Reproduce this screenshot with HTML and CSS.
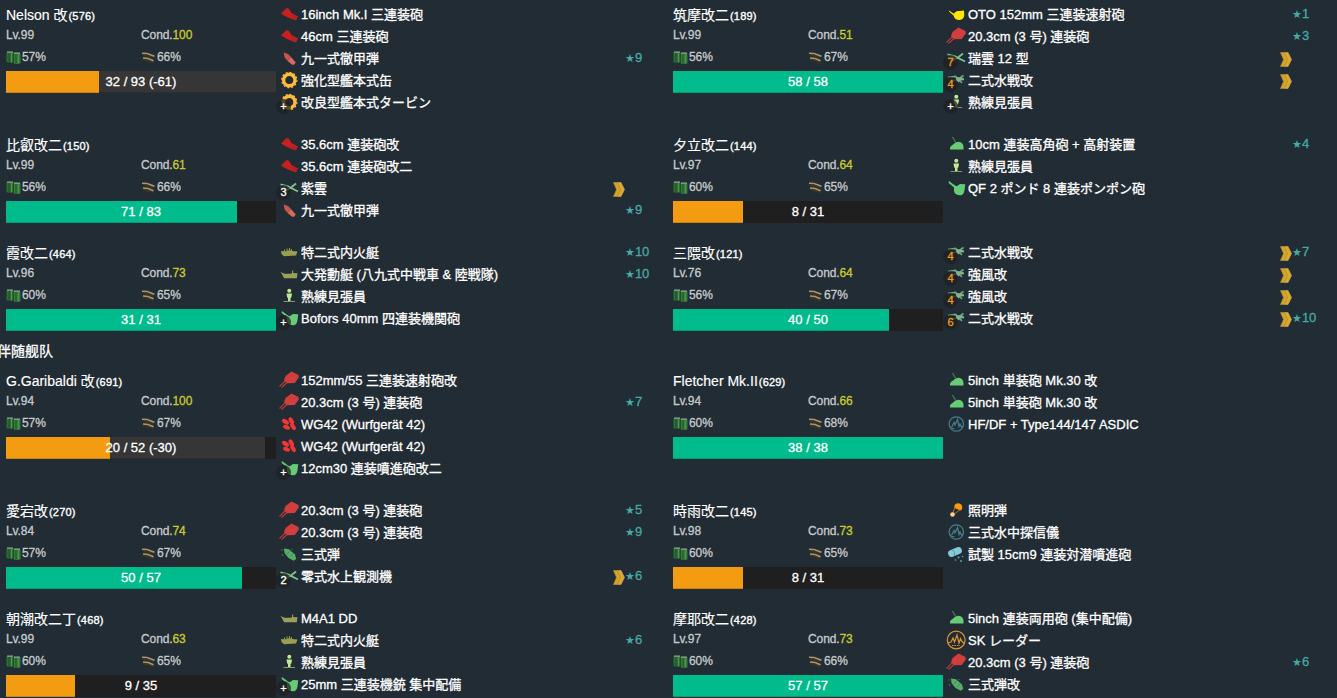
FILE: index.html
```html
<!DOCTYPE html>
<html lang="ja">
<head>
  <meta charset="UTF-8">
  <meta name="viewport" content="width=device-width, initial-scale=1.0">
  <title>艦隊</title>
  <link rel="stylesheet" href="styles.css">
</head>
<body>

  <!-- Icons -->
  <svg class="defs">
    <symbol id="main-l" viewBox="0 0 20 20"><path fill="#c9201f" d="M2 9.500 7.500 4l2.500.8L12.500 9l6.500 3.500-2 4-5.500-2L7 12.500z"/><path stroke="#8a2326" stroke-width=".6" d="m13 11 5 3M12.500 12.500l4.500 3"/></symbol>
    <symbol id="main-m" viewBox="0 0 20 20"><path fill="#d13e3e" d="m12.500 1.500 7 3.500.3 2.500-4 5.500-8.500.3L5 10l1.500-4z"/><path stroke="#b83a3b" stroke-width="1.100" d="M6 11 .5 16.500M8 12.500l-5.500 5"/></symbol>
    <symbol id="second" viewBox="0 0 20 20"><path fill="#ffe600" d="m3 6.500 5 3.200C10 6.500 12 7 14 7l4-.5.3 4.500q-.5 4.700-4.500 5-5 .2-6.300-4.500L3 7.500z"/></symbol>
    <symbol id="ap" viewBox="0 0 20 20"><path fill="#c9544f" d="m4.500 4.500 4.500 1.500 3 3-4 3.500-2.300-3z"/><path fill="#d46a63" d="m12 9 4.800 5.500-2 2.500-2.500-.7-4-3.900z"/></symbol>
    <symbol id="gear" viewBox="0 0 20 20"><circle cx="10.300" cy="10" r="5.700" fill="none" stroke="#fdbb38" stroke-width="3.400"/><circle cx="10.300" cy="10" r="7.600" fill="none" stroke="#fdbb38" stroke-width="1.200" stroke-dasharray="2 1.980"/></symbol>
    <symbol id="plane" viewBox="0 0 20 20"><path fill="none" stroke="#7fc08c" stroke-width="1.900" d="m1.500 6.300 7.500 2.200 10 5M4.500 14l7.500-4.500L17 5.500"/><path fill="none" stroke="#5d9169" d="m1 9.500 7-1M3 12l6-1.500"/></symbol>
    <symbol id="fighter" viewBox="0 0 20 20"><path fill="none" stroke="#6ea97b" stroke-width="1.700" d="m2 7.500 7.500-1 6.500 6.500M5 11.500l7-2 5.500-4"/><path fill="#7fb58a" d="m10 7 5 .5 3 1v1.800l-3.500.2-2 2L10 10z"/></symbol>
    <symbol id="lookout" viewBox="0 0 20 20"><circle cx="10.300" cy="4.800" r="2" fill="#c0e898"/><path fill="#c0e898" d="M7.500 7.500h5.600l-.8 4-.8.500v3H9v-3l-.8-.5z"/><path stroke="#7d9f6b" d="M4.500 15.500h11.500"/></symbol>
    <symbol id="tank" viewBox="0 0 20 20"><path fill="#9a9e52" d="m2 9 3 .3V7.500h1v1.800h1.500V6.500h1v2.300l1.500-.5V6h1v2.500h1V7h1v2l5.500.5-1.500 4-12 .8L2.500 12z"/></symbol>
    <symbol id="boat" viewBox="0 0 20 20"><path fill="#9c9f57" d="m1.500 8 4 1.700h6l1.500-.5V6.500l1.200.3V9l4.300.2-.7 5H5L3.500 11z"/></symbol>
    <symbol id="aagun" viewBox="0 0 20 20"><path fill="#66cc76" d="m3 3 6 4.500 1.800.7L14 6l5.200.3-.5 4.700q-.5 5-3 6-4 .8-6.700-1.500-1.500-2-1-6L2.500 4.700z"/></symbol>
    <symbol id="hagun" viewBox="0 0 20 20"><path fill="none" stroke="#457c52" stroke-width="1.300" d="m6.500 3 3 5"/><path fill="#66cc76" d="M4 15.500q-.3-3.500 2.500-4.500 3-3.300 6-3.200 5 .7 5 5.200v2.500z"/></symbol>
    <symbol id="rocket" viewBox="0 0 20 20"><g fill="#f33535"><ellipse cx="6.500" cy="7.800" rx="4" ry="2.200" transform="rotate(35 6.500 7.800)"/><ellipse cx="12.300" cy="6.800" rx="3.800" ry="2.200" transform="rotate(60 12.300 6.800)"/><ellipse cx="7.500" cy="13.300" rx="3.600" ry="2.100" transform="rotate(20 7.500 13.300)"/><ellipse cx="14" cy="12.500" rx="4" ry="2.200" transform="rotate(60 14 12.500)"/></g></symbol>
    <symbol id="aashell" viewBox="0 0 20 20"><path fill="#55ad68" d="m5 4.500 5 .8 6 5.200 1.200 4.500-2.500 1.800L9.500 14 5.500 9z"/><path stroke="#36774a" stroke-width=".6" d="m8 10 3-3m0 6 3-3"/><g fill="#448f57"><circle cx="3" cy="6" r=".7"/><circle cx="3.500" cy="11" r=".8"/><circle cx="13" cy="5.500" r=".6"/></g></symbol>
    <symbol id="sonar" viewBox="0 0 20 20"><g fill="none" stroke="#467e8e" stroke-width="1.200"><circle cx="10.300" cy="10" r="7.200"/><path d="m4 13.500 2-1 2-4 1 2.500 2.500-5.500 1.500 7 1-2.500 1.500 3 1.500-1M5.500 14.500h3"/></g></symbol>
    <symbol id="radar" viewBox="0 0 20 20"><g fill="none" stroke="#dc922f" stroke-width="1.200"><circle cx="10.200" cy="10" r="8.900"/><path d="m2 13 3-1 2-4 1.500 4 2.500-7 2 8 1.500-4.500 1.500 3 2.500 2"/><path stroke-dasharray="1.500 1" d="M6 15.500h8"/></g></symbol>
    <symbol id="flare" viewBox="0 0 20 20"><path fill="#ff9a09" d="M8.500 5q2-2.500 5-1.500 3 1 2.700 4.500-.5 2.500-1.700 2.500L8.500 8z"/><path stroke="#c87a16" stroke-width=".9" d="m9 7-2.500 7M14.500 9.500l-7 5"/><circle cx="6.500" cy="14.500" r="2.300" fill="#ffce91"/></symbol>
    <symbol id="asw" viewBox="0 0 20 20"><path stroke="#83cad5" stroke-width="6.800" stroke-linecap="round" d="m5.500 9.500 7-3"/><path fill="none" stroke="#4b91a0" stroke-width=".8" d="M6.500 6q3 2 2 6"/><g fill="#64aab8"><circle cx="9.500" cy="16" r=".8"/><circle cx="12.500" cy="13.500" r="1"/><circle cx="15" cy="17" r=".9"/><circle cx="16.500" cy="12.500" r=".8"/></g></symbol>
    <symbol id="fuel" viewBox="0 0 15 13"><rect x=".5" y="1" width="7" height="10.500" rx="1" fill="#2c6e30"/><rect x="7.500" y="2" width="7" height="10.800" rx="1" fill="#347c38"/><path fill="#8fa694" d="M1 .5h6v1.300H1zM8 1.500h6v1.300H8z"/><path stroke="#5d9a61" stroke-width=".8" d="M5.500 2v9.500M12.300 3v9.500"/><path stroke="#1b4724" stroke-width=".8" d="M3 2v9M7.500 3v9M10 3v9"/></symbol>
    <symbol id="ammo" viewBox="0 0 15 13"><path stroke="#3a3425" stroke-width="3.500" d="M2.500 3 13 6M2 7.500l11 3"/><path stroke="#a99670" stroke-width="1.600" d="m1 2.200 5 .3 7.500 2.700M2 7l5 .5 5.500 2.300"/></symbol>
    <symbol id="alv" viewBox="0 0 12 15"><path fill="#d9a421" stroke="#a88d45" stroke-width=".7" d="M.5.500h3.800L7.500 7.500l-3.200 7H.5l3-7z"/><path fill="#e0aa22" stroke="#bca35c" stroke-width=".7" d="M4.500.5H8l3.500 7-3.500 7H4.500l3.200-7z"/></symbol>
  </svg>

  <div class="fleet">
    <div class="ship">
      <div class="info">
        <div class="ship-name">Nelson 改<small>(576)</small></div>
        <div class="stats"><span>Lv.99</span><span>Cond.<em>100</em></span></div>
        <div class="supply"><span><svg><use href="#fuel"/></svg>57%</span><span><svg><use href="#ammo"/></svg>66%</span></div>
        <div class="hp"><div class="bar warn" style="width: 34.4%"></div><div class="bar lost" style="width: 65.6%"></div><span>32 / 93 (-61)</span></div>
      </div>
      <div class="slots">
        <div class="slot"><svg><use href="#main-l"/></svg><p>16inch Mk.I 三連装砲</p></div>
        <div class="slot"><svg><use href="#main-l"/></svg><p>46cm 三連装砲</p></div>
        <div class="slot"><svg><use href="#ap"/></svg><p>九一式徹甲弾</p><span class="star"><i>★</i>9</span></div>
        <div class="slot"><svg><use href="#gear"/></svg><p>強化型艦本式缶</p></div>
        <div class="slot"><svg><use href="#gear"/></svg><b>+</b><p>改良型艦本式タービン</p></div>
      </div>
    </div>
    <div class="ship">
      <div class="info">
        <div class="ship-name">筑摩改二<small>(189)</small></div>
        <div class="stats"><span>Lv.99</span><span>Cond.<em>51</em></span></div>
        <div class="supply"><span><svg><use href="#fuel"/></svg>56%</span><span><svg><use href="#ammo"/></svg>67%</span></div>
        <div class="hp"><div class="bar" style="width: 100%"></div><span>58 / 58</span></div>
      </div>
      <div class="slots">
        <div class="slot"><svg><use href="#second"/></svg><p>OTO 152mm 三連装速射砲</p><span class="star"><i>★</i>1</span></div>
        <div class="slot"><svg><use href="#main-m"/></svg><p>20.3cm (3 号) 連装砲</p><span class="star"><i>★</i>3</span></div>
        <div class="slot"><svg><use href="#plane"/></svg><b class="low">7</b><p>瑞雲 12 型</p><svg class="alv"><use href="#alv"/></svg><span class="star"></span></div>
        <div class="slot"><svg><use href="#fighter"/></svg><b class="low">4</b><p>二式水戦改</p><svg class="alv"><use href="#alv"/></svg><span class="star"></span></div>
        <div class="slot"><svg><use href="#lookout"/></svg><b>+</b><p>熟練見張員</p></div>
      </div>
    </div>

    <div class="ship">
      <div class="info">
        <div class="ship-name">比叡改二<small>(150)</small></div>
        <div class="stats"><span>Lv.99</span><span>Cond.<em>61</em></span></div>
        <div class="supply"><span><svg><use href="#fuel"/></svg>56%</span><span><svg><use href="#ammo"/></svg>66%</span></div>
        <div class="hp"><div class="bar" style="width: 85.5%"></div><span>71 / 83</span></div>
      </div>
      <div class="slots">
        <div class="slot"><svg><use href="#main-l"/></svg><p>35.6cm 連装砲改</p></div>
        <div class="slot"><svg><use href="#main-l"/></svg><p>35.6cm 連装砲改二</p></div>
        <div class="slot"><svg><use href="#plane"/></svg><b>3</b><p>紫雲</p><svg class="alv"><use href="#alv"/></svg><span class="star"></span></div>
        <div class="slot"><svg><use href="#ap"/></svg><p>九一式徹甲弾</p><span class="star"><i>★</i>9</span></div>
      </div>
    </div>
    <div class="ship">
      <div class="info">
        <div class="ship-name">夕立改二<small>(144)</small></div>
        <div class="stats"><span>Lv.97</span><span>Cond.<em>64</em></span></div>
        <div class="supply"><span><svg><use href="#fuel"/></svg>60%</span><span><svg><use href="#ammo"/></svg>65%</span></div>
        <div class="hp"><div class="bar warn" style="width: 25.8%"></div><span>8 / 31</span></div>
      </div>
      <div class="slots">
        <div class="slot"><svg><use href="#hagun"/></svg><p>10cm 連装高角砲 + 高射装置</p><span class="star"><i>★</i>4</span></div>
        <div class="slot"><svg><use href="#lookout"/></svg><p>熟練見張員</p></div>
        <div class="slot"><svg><use href="#aagun"/></svg><p>QF 2 ポンド 8 連装ポンポン砲</p></div>
      </div>
    </div>

    <div class="ship">
      <div class="info">
        <div class="ship-name">霞改二<small>(464)</small></div>
        <div class="stats"><span>Lv.96</span><span>Cond.<em>73</em></span></div>
        <div class="supply"><span><svg><use href="#fuel"/></svg>60%</span><span><svg><use href="#ammo"/></svg>65%</span></div>
        <div class="hp"><div class="bar" style="width: 100%"></div><span>31 / 31</span></div>
      </div>
      <div class="slots">
        <div class="slot"><svg><use href="#tank"/></svg><p>特二式内火艇</p><span class="star"><i>★</i>10</span></div>
        <div class="slot"><svg><use href="#boat"/></svg><p>大発動艇 (八九式中戦車 &amp; 陸戦隊)</p><span class="star"><i>★</i>10</span></div>
        <div class="slot"><svg><use href="#lookout"/></svg><p>熟練見張員</p></div>
        <div class="slot"><svg><use href="#aagun"/></svg><b>+</b><p>Bofors 40mm 四連装機関砲</p></div>
      </div>
    </div>
    <div class="ship">
      <div class="info">
        <div class="ship-name">三隈改<small>(121)</small></div>
        <div class="stats"><span>Lv.76</span><span>Cond.<em>64</em></span></div>
        <div class="supply"><span><svg><use href="#fuel"/></svg>56%</span><span><svg><use href="#ammo"/></svg>67%</span></div>
        <div class="hp"><div class="bar" style="width: 80%"></div><span>40 / 50</span></div>
      </div>
      <div class="slots">
        <div class="slot"><svg><use href="#fighter"/></svg><b class="low">4</b><p>二式水戦改</p><svg class="alv"><use href="#alv"/></svg><span class="star"><i>★</i>7</span></div>
        <div class="slot"><svg><use href="#fighter"/></svg><b class="low">4</b><p>強風改</p><svg class="alv"><use href="#alv"/></svg><span class="star"></span></div>
        <div class="slot"><svg><use href="#fighter"/></svg><b class="low">4</b><p>強風改</p><svg class="alv"><use href="#alv"/></svg><span class="star"></span></div>
        <div class="slot"><svg><use href="#fighter"/></svg><b class="low">6</b><p>二式水戦改</p><svg class="alv"><use href="#alv"/></svg><span class="star"><i>★</i>10</span></div>
      </div>
    </div>
  </div>

  <h2 lang="zh-CN">伴随舰队</h2>

  <div class="fleet">
    <div class="ship">
      <div class="info">
        <div class="ship-name">G.Garibaldi 改<small>(691)</small></div>
        <div class="stats"><span>Lv.94</span><span>Cond.<em>100</em></span></div>
        <div class="supply"><span><svg><use href="#fuel"/></svg>57%</span><span><svg><use href="#ammo"/></svg>67%</span></div>
        <div class="hp"><div class="bar warn" style="width: 38.5%"></div><div class="bar lost" style="width: 57.5%"></div><span>20 / 52 (-30)</span></div>
      </div>
      <div class="slots">
        <div class="slot"><svg><use href="#main-m"/></svg><p>152mm/55 三連装速射砲改</p></div>
        <div class="slot"><svg><use href="#main-m"/></svg><p>20.3cm (3 号) 連装砲</p><span class="star"><i>★</i>7</span></div>
        <div class="slot"><svg><use href="#rocket"/></svg><p>WG42 (Wurfgerät 42)</p></div>
        <div class="slot"><svg><use href="#rocket"/></svg><p>WG42 (Wurfgerät 42)</p></div>
        <div class="slot"><svg><use href="#aagun"/></svg><b>+</b><p>12cm30 連装噴進砲改二</p></div>
      </div>
    </div>
    <div class="ship">
      <div class="info">
        <div class="ship-name">Fletcher Mk.II<small>(629)</small></div>
        <div class="stats"><span>Lv.94</span><span>Cond.<em>66</em></span></div>
        <div class="supply"><span><svg><use href="#fuel"/></svg>60%</span><span><svg><use href="#ammo"/></svg>68%</span></div>
        <div class="hp"><div class="bar" style="width: 100%"></div><span>38 / 38</span></div>
      </div>
      <div class="slots">
        <div class="slot"><svg><use href="#hagun"/></svg><p>5inch 単装砲 Mk.30 改</p></div>
        <div class="slot"><svg><use href="#hagun"/></svg><p>5inch 単装砲 Mk.30 改</p></div>
        <div class="slot"><svg><use href="#sonar"/></svg><p>HF/DF + Type144/147 ASDIC</p></div>
      </div>
    </div>

    <div class="ship">
      <div class="info">
        <div class="ship-name">愛宕改<small>(270)</small></div>
        <div class="stats"><span>Lv.84</span><span>Cond.<em>74</em></span></div>
        <div class="supply"><span><svg><use href="#fuel"/></svg>57%</span><span><svg><use href="#ammo"/></svg>67%</span></div>
        <div class="hp"><div class="bar" style="width: 87.5%"></div><span>50 / 57</span></div>
      </div>
      <div class="slots">
        <div class="slot"><svg><use href="#main-m"/></svg><p>20.3cm (3 号) 連装砲</p><span class="star"><i>★</i>5</span></div>
        <div class="slot"><svg><use href="#main-m"/></svg><p>20.3cm (3 号) 連装砲</p><span class="star"><i>★</i>9</span></div>
        <div class="slot"><svg><use href="#aashell"/></svg><p>三式弾</p></div>
        <div class="slot"><svg><use href="#plane"/></svg><b>2</b><p>零式水上観測機</p><svg class="alv"><use href="#alv"/></svg><span class="star"><i>★</i>6</span></div>
      </div>
    </div>
    <div class="ship">
      <div class="info">
        <div class="ship-name">時雨改二<small>(145)</small></div>
        <div class="stats"><span>Lv.98</span><span>Cond.<em>73</em></span></div>
        <div class="supply"><span><svg><use href="#fuel"/></svg>60%</span><span><svg><use href="#ammo"/></svg>65%</span></div>
        <div class="hp"><div class="bar warn" style="width: 25.8%"></div><span>8 / 31</span></div>
      </div>
      <div class="slots">
        <div class="slot"><svg><use href="#flare"/></svg><p>照明弾</p></div>
        <div class="slot"><svg><use href="#sonar"/></svg><p>三式水中探信儀</p></div>
        <div class="slot"><svg><use href="#asw"/></svg><p>試製 15cm9 連装対潜噴進砲</p></div>
      </div>
    </div>

    <div class="ship">
      <div class="info">
        <div class="ship-name">朝潮改二丁<small>(468)</small></div>
        <div class="stats"><span>Lv.99</span><span>Cond.<em>63</em></span></div>
        <div class="supply"><span><svg><use href="#fuel"/></svg>60%</span><span><svg><use href="#ammo"/></svg>65%</span></div>
        <div class="hp"><div class="bar warn" style="width: 25.7%"></div><span>9 / 35</span></div>
      </div>
      <div class="slots">
        <div class="slot"><svg><use href="#boat"/></svg><p>M4A1 DD</p></div>
        <div class="slot"><svg><use href="#tank"/></svg><p>特二式内火艇</p><span class="star"><i>★</i>6</span></div>
        <div class="slot"><svg><use href="#lookout"/></svg><p>熟練見張員</p></div>
        <div class="slot"><svg><use href="#aagun"/></svg><b>+</b><p>25mm 三連装機銃 集中配備</p></div>
      </div>
    </div>
    <div class="ship">
      <div class="info">
        <div class="ship-name">摩耶改二<small>(428)</small></div>
        <div class="stats"><span>Lv.97</span><span>Cond.<em>73</em></span></div>
        <div class="supply"><span><svg><use href="#fuel"/></svg>60%</span><span><svg><use href="#ammo"/></svg>66%</span></div>
        <div class="hp"><div class="bar" style="width: 100%"></div><span>57 / 57</span></div>
      </div>
      <div class="slots">
        <div class="slot"><svg><use href="#hagun"/></svg><p>5inch 連装両用砲 (集中配備)</p></div>
        <div class="slot"><svg><use href="#radar"/></svg><p>SK レーダー</p></div>
        <div class="slot"><svg><use href="#main-m"/></svg><p>20.3cm (3 号) 連装砲</p><span class="star"><i>★</i>6</span></div>
        <div class="slot"><svg><use href="#aashell"/></svg><p>三式弾改</p></div>
      </div>
    </div>
  </div>

</body>
</html>
```
FILE: styles.css
```css
body {
  margin: 0;
  padding-top: 3px;
  height: 695px;
  overflow: hidden;
  background-color: #222c34;
  color: #fff;
  font-family: "Liberation Sans", "Noto Sans CJK JP", sans-serif;
  font-size: 13px;
  line-height: 22px;
  -webkit-text-stroke: 0.3px;
}
.defs {
  display: none;
}
h2 {
  margin: 11px 0 7px -3px;
  font-size: 14px;
  font-weight: normal;
  line-height: 22px;
  height: 22px;
  font-family: "Liberation Sans", "Noto Sans CJK SC", sans-serif;
}
.fleet {
  display: grid;
  grid-template-columns: 667px 667px;
  row-gap: 20px;
}
.ship {
  display: flex;
  align-items: flex-start;
  padding-left: 6px;
}

/* Ship info */
.info {
  width: 270px;
  margin-bottom: -2px;
  font-size: 12px;
}
.ship-name {
  height: 22px;
  line-height: 24px;
  font-size: 14px;
  white-space: nowrap;
  -webkit-text-stroke: 0.15px;
}
.ship-name small {
  margin-left: 1px;
  font-size: 11px;
  letter-spacing: 0.2px;
  -webkit-text-stroke: 0.35px;
}
.stats, .supply {
  display: grid;
  grid-template-columns: 1fr 1fr;
  color: #c6cacc;
  letter-spacing: -0.1px;
}
.stats {
  height: 20px;
  line-height: 20px;
}
.stats em {
  font-style: normal;
  color: #c9ca32;
}
.supply {
  height: 26px;
  line-height: 24px;
}
.supply span {
  display: flex;
  align-items: center;
  height: 24px;
}
.supply svg {
  width: 15px;
  height: 13px;
  margin-right: 1px;
}
.hp {
  display: flex;
  position: relative;
  height: 22px;
  background-color: #1f1f1f;
}
.bar {
  background-color: #00bc8c;
  box-shadow: inset 0 -1px 0 rgba(0, 0, 0, 0.15);
}
.bar.warn {
  background-color: #f39c12;
}
.bar.lost {
  background-color: #363636;
}
.hp span {
  position: absolute;
  width: 100%;
  text-align: center;
  font-size: 13px;
}

/* Equipment */
.slots {
  flex: 1;
  padding-left: 3px;
}
.slot {
  display: flex;
  align-items: center;
  position: relative;
  height: 22px;
}
.slot svg {
  width: 20px;
  height: 20px;
}
.slot p {
  flex: 1;
  margin: 0 0 0 2px;
  padding-top: 1px;
  white-space: nowrap;
}
.slot .alv {
  width: 12px;
  height: 15px;
  margin-top: 2px;
}
.star {
  width: 42px;
  color: #45a9a4;
}
.star i {
  font-family: "DejaVu Sans", sans-serif;
  font-size: 11px;
  font-style: normal;
  -webkit-text-stroke: 0;
}
/* plane count or extra slot mark */
.slot b {
  position: absolute;
  left: -3px;
  top: 8px;
  width: 15px;
  height: 15px;
  border-radius: 50%;
  background-color: rgba(32, 32, 32, 0.75);
  font-size: 11px;
  font-weight: normal;
  line-height: 15px;
  text-align: center;
}
.slot b.low {
  color: #f39c12;
}
```
